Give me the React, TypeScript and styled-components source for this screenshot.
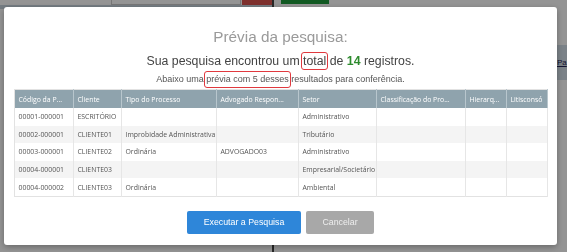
import styled, { createGlobalStyle } from "styled-components";

const GlobalStyle = createGlobalStyle`
  html, body {
    margin: 0;
    padding: 0;
    width: 567px;
    height: 252px;
    overflow: hidden;
    background: #fff;
    font-family: "Liberation Sans", Arial, sans-serif;
  }
`;

type Row = {
  codigo: string;
  cliente: string;
  tipo: string;
  advogado: string;
  setor: string;
};

const columns = [
  { label: "Código da P...", width: 59 },
  { label: "Cliente", width: 48 },
  { label: "Tipo do Processo", width: 95 },
  { label: "Advogado Respon...", width: 82 },
  { label: "Setor", width: 78 },
  { label: "Classificação do Pro...", width: 89 },
  { label: "Hierarq...", width: 41 },
  { label: "Litisconsó", width: 41 },
];

const rows: Row[] = [
  { codigo: "00001-000001", cliente: "ESCRITÓRIO", tipo: "", advogado: "", setor: "Administrativo" },
  { codigo: "00002-000001", cliente: "CLIENTE01", tipo: "Improbidade Administrativa", advogado: "", setor: "Tributário" },
  { codigo: "00003-000001", cliente: "CLIENTE02", tipo: "Ordinária", advogado: "ADVOGADO03", setor: "Administrativo" },
  { codigo: "00004-000001", cliente: "CLIENTE03", tipo: "", advogado: "", setor: "Empresarial/Societário" },
  { codigo: "00004-000002", cliente: "CLIENTE03", tipo: "Ordinária", advogado: "", setor: "Ambiental" },
];

function App() {
  return (
    <>
      <GlobalStyle />
      <Page>
        <LeftPane>
          <Toolbar>
            <SearchBox />
            <DangerButton />
          </Toolbar>
          <GridHeader />
        </LeftPane>
        <RightPane>
          <SuccessButton />
          <LinkBar>
            <a href="#">Pa</a>
          </LinkBar>
        </RightPane>
      </Page>

      <Backdrop>
        <Modal>
          <Title>Prévia da pesquisa:</Title>
          <Summary>
            Sua pesquisa encontrou um <Marked>total</Marked> de <Count>14</Count> registros.
          </Summary>
          <Hint>
            Abaixo uma <Marked>prévia com 5 desses</Marked> resultados para conferência.
          </Hint>

          <Table>
            <colgroup>
              {columns.map((c) => (
                <col key={c.label} style={{ width: c.width }} />
              ))}
            </colgroup>
            <thead>
              <tr>
                {columns.map((c) => (
                  <Th key={c.label}>{c.label}</Th>
                ))}
              </tr>
            </thead>
            <tbody>
              {rows.map((r) => (
                <Tr key={r.codigo}>
                  <Td>{r.codigo}</Td>
                  <Td>{r.cliente}</Td>
                  <Td>{r.tipo}</Td>
                  <Td>{r.advogado}</Td>
                  <Td>{r.setor}</Td>
                  <Td />
                  <Td />
                  <Td />
                </Tr>
              ))}
            </tbody>
          </Table>

          <Actions>
            <Button $variant="primary">Executar a Pesquisa</Button>
            <Button $variant="muted">Cancelar</Button>
          </Actions>
        </Modal>
      </Backdrop>
    </>
  );
}

export default App;

const Page = styled.div`
  display: grid;
  grid-template-columns: 274px 1fr;
  height: 252px;
`;

const LeftPane = styled.div`
  border-right: 2px solid #444;
  display: flex;
  flex-direction: column;
`;

const Toolbar = styled.div`
  display: flex;
  justify-content: flex-end;
  height: 5px;
`;

const SearchBox = styled.div`
  width: 128px;
  border: 1px solid #ccc;
  border-top: none;
  background: #fff;
`;

const DangerButton = styled.div`
  width: 30px;
  margin-left: 1px;
  background: #d9534f;
`;

const GridHeader = styled.div`
  height: 4px;
  background: #c9d6e0;
`;

const RightPane = styled.div`
  display: flex;
  flex-direction: column;
`;

const SuccessButton = styled.div`
  margin-left: 7px;
  width: 48px;
  height: 4px;
  background: #1e9a3c;
`;

const LinkBar = styled.div`
  margin-top: 41px;
  height: 35px;
  background: #d4e0ea;
  display: flex;
  justify-content: flex-end;
  align-items: center;

  a {
    font-size: 8px;
    color: #225;
    width: 10px;
  }
`;

const Backdrop = styled.div`
  position: fixed;
  inset: 0;
  background: rgba(0, 0, 0, 0.42);
  display: flex;
  align-items: flex-start;
  padding: 7px 10px 0 4px;
`;

const Modal = styled.div`
  width: 553px;
  height: 238px;
  box-sizing: border-box;
  background: #fff;
  border-radius: 3px;
  box-shadow: 0 2px 6px rgba(0, 0, 0, 0.3);
  padding: 21px 10px 0;
  display: flex;
  flex-direction: column;
  align-items: center;
`;

const Title = styled.h2`
  margin: 0;
  font-size: 15.3px;
  line-height: 18px;
  font-weight: normal;
  color: #9a9a9a;
`;

const Summary = styled.p`
  margin: 6px 0 0;
  font-size: 12.3px;
  line-height: 16px;
  color: #444;
`;

const Hint = styled.p`
  margin: 1px 0 0;
  font-size: 9px;
  line-height: 15px;
  color: #555;
`;

const Marked = styled.span`
  display: inline-block;
  border: 1px solid #e0393e;
  border-radius: 3px;
  padding: 0 1px;
  margin: 0 -2px;
`;

const Count = styled.b`
  color: #2e8b2e;
`;

const Table = styled.table`
  margin-top: 1px;
  width: 533px;
  table-layout: fixed;
  border-collapse: collapse;
  border: 1px solid #e2e2e2;
  font-family: "Open Sans", sans-serif;
  font-size: 6.9px;
`;

const Th = styled.th`
  background: #8fa3ad;
  color: #fff;
  font-weight: normal;
  text-align: left;
  height: 18px;
  padding: 0 4px;
  border-right: 1px solid #b8c6cd;
  white-space: nowrap;
  overflow: hidden;
`;

const Tr = styled.tr`
  &:nth-child(even) {
    background: #f4f4f4;
  }
`;

const Td = styled.td`
  height: 17.6px;
  padding: 0 4px;
  color: #555;
  border-right: 1px solid #e6e6e6;
  white-space: nowrap;
  overflow: hidden;
`;

const Actions = styled.div`
  margin-top: 14px;
  display: flex;
  gap: 5px;
`;

const Button = styled.button<{ $variant: "primary" | "muted" }>`
  height: 23px;
  padding: 0;
  width: ${(p) => (p.$variant === "primary" ? "114px" : "68px")};
  border: none;
  border-radius: 2px;
  font-family: "Liberation Sans", Arial, sans-serif;
  font-size: 8.8px;
  color: ${(p) => (p.$variant === "primary" ? "#fff" : "#eee")};
  background: ${(p) => (p.$variant === "primary" ? "#2e86d9" : "#a8a8a8")};
`;
